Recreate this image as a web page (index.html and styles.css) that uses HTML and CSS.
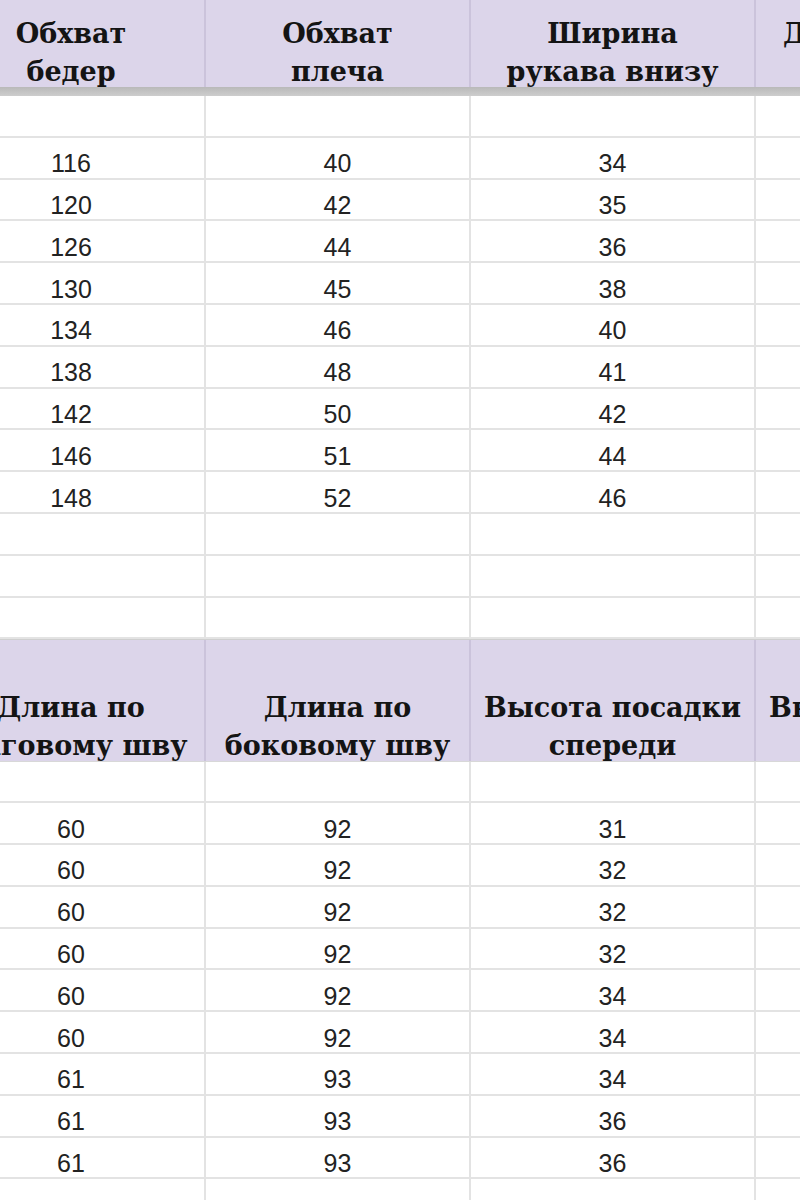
FILE: index.html
```html
<!DOCTYPE html>
<html lang="ru">
<head>
<meta charset="utf-8">
<link rel="stylesheet" href="styles.css">
</head>
<body>
<div class="sheet">
  <div class="row head h1">
    <div class="c"><span>Обхват<br>бедер</span></div>
    <div class="c"><span>Обхват<br>плеча</span></div>
    <div class="c"><span>Ширина<br>рукава внизу</span></div>
    <div class="c side"><span>Длина изделия<br>по</span></div>
  </div>
  <div class="frozen"></div>
  <div class="row"><div class="c"></div><div class="c"></div><div class="c"></div><div class="c"></div></div>
  <div class="row"><div class="c">116</div><div class="c">40</div><div class="c">34</div><div class="c"></div></div>
  <div class="row"><div class="c">120</div><div class="c">42</div><div class="c">35</div><div class="c"></div></div>
  <div class="row"><div class="c">126</div><div class="c">44</div><div class="c">36</div><div class="c"></div></div>
  <div class="row"><div class="c">130</div><div class="c">45</div><div class="c">38</div><div class="c"></div></div>
  <div class="row"><div class="c">134</div><div class="c">46</div><div class="c">40</div><div class="c"></div></div>
  <div class="row"><div class="c">138</div><div class="c">48</div><div class="c">41</div><div class="c"></div></div>
  <div class="row"><div class="c">142</div><div class="c">50</div><div class="c">42</div><div class="c"></div></div>
  <div class="row"><div class="c">146</div><div class="c">51</div><div class="c">44</div><div class="c"></div></div>
  <div class="row"><div class="c">148</div><div class="c">52</div><div class="c">46</div><div class="c"></div></div>
  <div class="row"><div class="c"></div><div class="c"></div><div class="c"></div><div class="c"></div></div>
  <div class="row"><div class="c"></div><div class="c"></div><div class="c"></div><div class="c"></div></div>
  <div class="row"><div class="c"></div><div class="c"></div><div class="c"></div><div class="c"></div></div>
  <div class="row head h2">
    <div class="c"><span>Длина по<br>шаговому шву</span></div>
    <div class="c"><span>Длина по<br>боковому шву</span></div>
    <div class="c"><span>Высота посадки<br>спереди</span></div>
    <div class="c"><span>Высота посадки<br>сзади</span></div>
  </div>
  <div class="row"><div class="c"></div><div class="c"></div><div class="c"></div><div class="c"></div></div>
  <div class="row"><div class="c">60</div><div class="c">92</div><div class="c">31</div><div class="c"></div></div>
  <div class="row"><div class="c">60</div><div class="c">92</div><div class="c">32</div><div class="c"></div></div>
  <div class="row"><div class="c">60</div><div class="c">92</div><div class="c">32</div><div class="c"></div></div>
  <div class="row"><div class="c">60</div><div class="c">92</div><div class="c">32</div><div class="c"></div></div>
  <div class="row"><div class="c">60</div><div class="c">92</div><div class="c">34</div><div class="c"></div></div>
  <div class="row"><div class="c">60</div><div class="c">92</div><div class="c">34</div><div class="c"></div></div>
  <div class="row"><div class="c">61</div><div class="c">93</div><div class="c">34</div><div class="c"></div></div>
  <div class="row"><div class="c">61</div><div class="c">93</div><div class="c">36</div><div class="c"></div></div>
  <div class="row"><div class="c">61</div><div class="c">93</div><div class="c">36</div><div class="c"></div></div>
  <div class="row"><div class="c"></div><div class="c"></div><div class="c"></div><div class="c"></div></div>
</div>
</body>
</html>
```
FILE: styles.css
```css
html, body {
  margin: 0;
  padding: 0;
  background: #ffffff;
  overflow: hidden;
}
.sheet {
  width: 1100px;
  margin-left: -62px;
  font-family: "Liberation Sans", Arial, sans-serif;
  color: #222222;
}
.row {
  display: grid;
  grid-template-columns: 268px 265px 285px 285px;
  height: 41.8px;
  box-sizing: border-box;
  border-bottom: 2px solid #e3e3e3;
}
.row .c {
  box-sizing: border-box;
  border-right: 2px solid #e3e3e3;
  display: flex;
  align-items: center;
  justify-content: center;
  font-size: 25px;
  line-height: 1;
  padding-top: 12px;
}
.head {
  background: #dcd5ea;
  border-bottom: none;
}
.head .c {
  border-right: 2px solid #cbc3db;
  align-items: flex-end;
  text-align: center;
  font-family: "DejaVu Serif", Georgia, serif;
  font-weight: bold;
  font-size: 27px;
  line-height: 38px;
  color: #141414;
  padding: 0;
  white-space: nowrap;
}
.head .c span {
  margin-bottom: -4px;
}
.head.h1 {
  height: 87px;
}
.head.h2 {
  height: 122px;
  border-top: 1px solid #cfcfcf;
}
.head.h2 + .row {
  border-top: 1px solid #d8d8d8;
}
.head .c.side {
  padding-left: 12px;
}
.frozen {
  height: 9px;
  background: linear-gradient(#b9b9b9, #cdcdcd);
}
```
